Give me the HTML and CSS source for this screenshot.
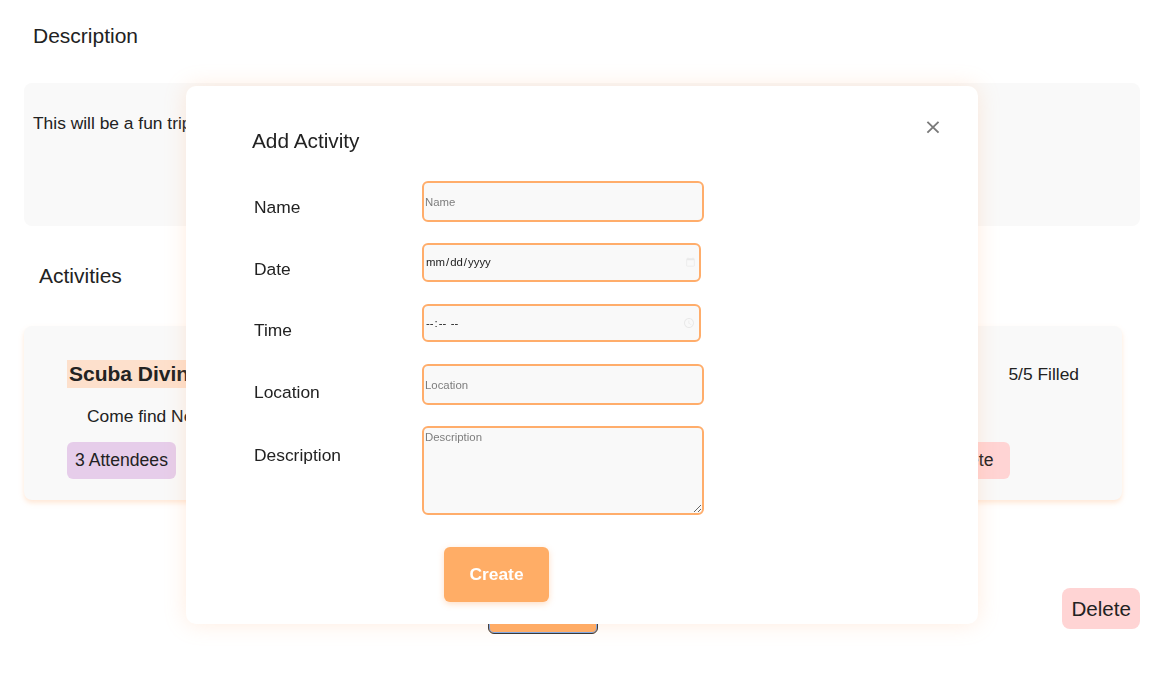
FILE: index.html
```html
<!DOCTYPE html>
<html lang="en">
<head>
<meta charset="utf-8">
<title>Trip</title>
<link rel="stylesheet" href="styles.css">
</head>
<body>
<main class="page">
  <h2 class="section-title">Description</h2>
  <div class="desc-box">This will be a fun trip!</div>
  <h2 class="section-title activities-title">Activities</h2>
  <div class="activity-card">
    <div class="activity-main">
      <div class="activity-name">Scuba Diving</div>
      <p class="activity-desc">Come find Nemo!</p>
      <div class="activity-row">
        <span class="badge attendees">3 Attendees</span>
        <button class="badge card-delete">Delete</button>
      </div>
    </div>
    <div class="activity-filled">5/5 Filled</div>
  </div>
  <div class="page-actions">
    <button class="add-btn">Add</button>
    <button class="delete-btn">Delete</button>
  </div>
</main>

<div class="modal">
  <h3 class="modal-title">Add Activity</h3>
  <button class="modal-close" aria-label="Close">&times;</button>
  <form class="modal-form">
    <label class="field-label">Name</label>
    <input class="field-input" type="text" placeholder="Name">
    <label class="field-label">Date</label>
    <input class="field-input narrow" type="date">
    <label class="field-label">Time</label>
    <input class="field-input narrow short" type="time">
    <label class="field-label lower">Location</label>
    <input class="field-input" type="text" placeholder="Location">
    <label class="field-label lowest">Description</label>
    <textarea class="field-input field-area" placeholder="Description"></textarea>
    <span></span>
    <button type="button" class="create-btn">Create</button>
  </form>
</div>
</body>
</html>
```

FILE: styles.css
```css
* { box-sizing: border-box; }

html, body {
  margin: 0;
  padding: 0;
  background: #ffffff;
}

body {
  font-family: "Liberation Sans", Arial, sans-serif;
  color: #222222;
  width: 1160px;
  height: 674px;
  overflow: hidden;
}

.page {
  padding: 0 20px 0 24px;
}

.section-title {
  margin: 24px 0 0 9px;
  font-size: 21px;
  line-height: 24px;
  font-weight: 400;
}

.desc-box {
  margin-top: 35px;
  min-height: 143px;
  background: #f9f9f9;
  border-radius: 8px;
  padding: 30px 9px;
  font-size: 17.4px;
  line-height: 20px;
}

.activities-title {
  margin: 38px 0 0 15px;
}

.activity-card {
  margin: 38px 18px 0 0;
  background: #f9f9f9;
  border-radius: 8px;
  padding: 34px 43px 21px 43px;
  display: flex;
  box-shadow: 0 3px 5px rgba(255, 190, 140, 0.35);
}

.activity-main {
  flex: 1;
}

.activity-name {
  display: inline-block;
  background: #fde0cc;
  font-weight: 700;
  font-size: 21px;
  line-height: 28px;
  padding: 0 2px;
}

.activity-desc {
  margin: 18px 0 0 20px;
  font-size: 17.4px;
  line-height: 20px;
}

.activity-row {
  margin-top: 16px;
  display: flex;
  justify-content: space-between;
}

.badge {
  display: inline-block;
  height: 37px;
  line-height: 37px;
  padding: 0 8px;
  border-radius: 6px;
  font-size: 17.6px;
  font-family: inherit;
  color: #222;
  border: none;
}

.attendees {
  background: #e6cdea;
}

.card-delete {
  background: #ffd4d4;
  padding: 0 17px 0 8px;
  margin-right: -2px;
}

.activity-filled {
  font-size: 17.4px;
  line-height: 28px;
}

.page-actions {
  margin-top: 88px;
  display: flex;
  align-items: flex-start;
}

.add-btn {
  margin: 6px 0 0 464px;
  width: 110px;
  height: 40px;
  background: #ffad66;
  border: 1px solid #333;
  border-radius: 6px;
  box-shadow: inset 0 0 0 1px #7aa7e8;
  color: #fff;
  font-family: inherit;
  font-size: 17px;
}

.delete-btn {
  margin-left: auto;
  height: 41px;
  padding: 0 9px;
  background: #ffd4d4;
  border: none;
  border-radius: 8px;
  font-family: inherit;
  font-size: 20.6px;
  color: #222;
}

/* Modal overlay */
.modal {
  position: fixed;
  left: 186px;
  top: 86px;
  width: 792px;
  height: 538px;
  background: #ffffff;
  border-radius: 10px;
  box-shadow: 0 0 22px rgba(255, 170, 110, 0.22);
  padding: 43px 66px 0 66px;
}

.modal-title {
  margin: 0;
  font-size: 20.8px;
  line-height: 24px;
  font-weight: 400;
}

.modal-close {
  position: absolute;
  right: 34px;
  top: 28px;
  width: 22px;
  height: 26px;
  padding: 0;
  border: none;
  background: transparent;
  color: #7a7a7a;
  font-size: 22px;
  line-height: 26px;
  font-family: "DejaVu Sans", sans-serif;
  cursor: pointer;
}

.modal-form {
  margin-top: 28px;
  display: grid;
  grid-template-columns: 170px 282px;
  grid-template-rows: 41px 40px 39px 41px 89px auto;
  row-gap: 21px;
  align-items: start;
}

.field-label {
  padding: 16px 0 0 2px;
  font-size: 17.4px;
  line-height: 20px;
}

.field-label.lower { padding-top: 18px; }
.field-label.lowest { padding-top: 19px; }

.field-input {
  width: 282px;
  height: 41px;
  border: 2px solid #ffad6b;
  border-radius: 6px;
  background: #f9f9f9;
  font-family: "Liberation Sans", Arial, sans-serif;
  font-size: 11.4px;
  color: #222;
  padding: 0 1px;
  outline: none;
}

.field-input.narrow {
  width: 279px;
  height: 39px;
}

.field-input.short {
  height: 38px;
}

.field-input::-webkit-calendar-picker-indicator {
  opacity: 0.06;
}

.field-input::placeholder {
  color: #7d7d7d;
}

.field-area {
  height: 89px;
  padding: 3px 1px;
  resize: vertical;
}

.create-btn {
  margin: 11px 0 0 22px;
  width: 105px;
  height: 55px;
  background: #ffad66;
  color: #ffffff;
  border: none;
  border-radius: 6px;
  font-family: "Liberation Sans", Arial, sans-serif;
  font-weight: 700;
  font-size: 17.4px;
  box-shadow: 0 2px 6px rgba(255, 160, 90, 0.35);
}
```
